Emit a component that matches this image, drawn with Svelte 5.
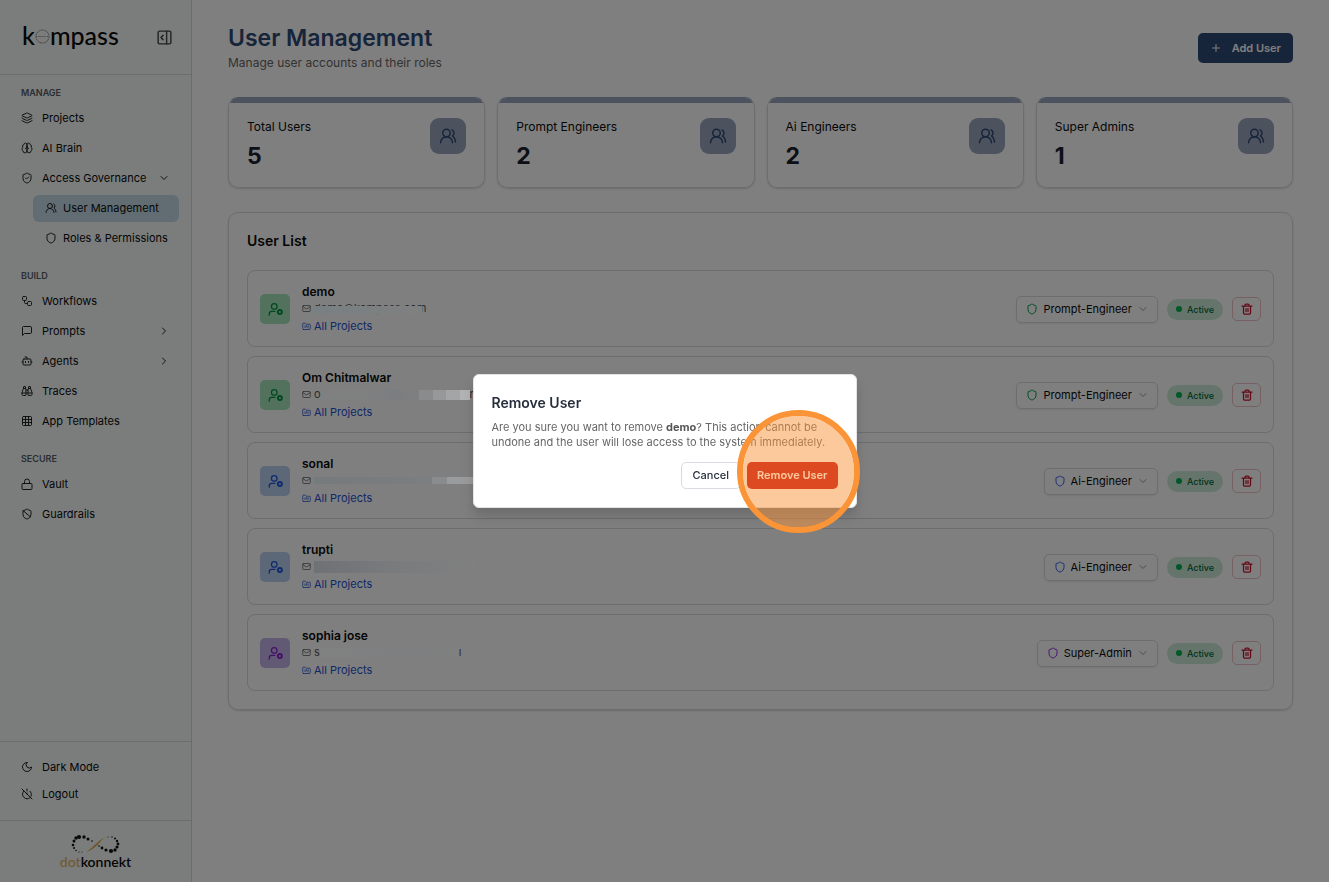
<script lang="ts">
  interface NavItem {
    label: string;
    icon: string;
    chevron?: string;
    sub?: boolean;
    active?: boolean;
  }

  interface User {
    name: string;
    emailStart: string;
    emailEnd: string;
    mask: string;
    role: string;
    tone: string;
  }

  const icons: Record<string, string> = {
    layers:
      '<path d="M12.8 2.2a2 2 0 0 0-1.7 0L2.6 6.1a1 1 0 0 0 0 1.8l8.6 3.9a2 2 0 0 0 1.6 0l8.6-3.9a1 1 0 0 0 0-1.8z"/><path d="M2 12a1 1 0 0 0 .6.9l8.6 3.9a2 2 0 0 0 1.6 0l8.6-3.9A1 1 0 0 0 22 12"/><path d="M2 17a1 1 0 0 0 .6.9l8.6 3.9a2 2 0 0 0 1.6 0l8.6-3.9A1 1 0 0 0 22 17"/>',
    brain:
      '<path d="M12 5a3 3 0 1 0-6 .1 4 4 0 0 0-2.5 5.8 4 4 0 0 0 .5 6.6A4 4 0 1 0 12 18z"/><path d="M12 5a3 3 0 1 1 6 .1 4 4 0 0 1 2.5 5.8 4 4 0 0 1-.5 6.6A4 4 0 1 1 12 18z"/><path d="M15 13a4.5 4.5 0 0 1-3-4 4.5 4.5 0 0 1-3 4"/>',
    shield:
      '<path d="M20 13c0 5-3.5 7.5-7.7 9a1 1 0 0 1-.6 0C7.5 20.5 4 18 4 13V6a1 1 0 0 1 1-1c2 0 4.5-1.2 6.2-2.7a1.2 1.2 0 0 1 1.5 0C14.5 3.8 17 5 19 5a1 1 0 0 1 1 1z"/>',
    shieldCheck:
      '<path d="M20 13c0 5-3.5 7.5-7.7 9a1 1 0 0 1-.6 0C7.5 20.5 4 18 4 13V6a1 1 0 0 1 1-1c2 0 4.5-1.2 6.2-2.7a1.2 1.2 0 0 1 1.5 0C14.5 3.8 17 5 19 5a1 1 0 0 1 1 1z"/><path d="m9 12 2 2 4-4"/>',
    shieldBan:
      '<path d="M20 13c0 5-3.5 7.5-7.7 9a1 1 0 0 1-.6 0C7.5 20.5 4 18 4 13V6a1 1 0 0 1 1-1c2 0 4.5-1.2 6.2-2.7a1.2 1.2 0 0 1 1.5 0C14.5 3.8 17 5 19 5a1 1 0 0 1 1 1z"/><path d="m4.2 5.2 14.4 12.5"/>',
    users:
      '<path d="M18 21a8 8 0 0 0-16 0"/><circle cx="10" cy="8" r="5"/><path d="M22 20c0-3.4-2-6.5-4-8a5 5 0 0 0-.5-8.3"/>',
    workflow:
      '<rect width="8" height="8" x="3" y="3" rx="2"/><path d="M7 11v4a2 2 0 0 0 2 2h4"/><rect width="8" height="8" x="13" y="13" rx="2"/>',
    message:
      '<path d="M21 15a2 2 0 0 1-2 2H7l-4 4V5a2 2 0 0 1 2-2h14a2 2 0 0 1 2 2z"/>',
    bot: '<path d="M12 8V4H8"/><rect width="16" height="12" x="4" y="8" rx="2"/><path d="M2 14h2M20 14h2M15 13v2M9 13v2"/>',
    binoculars:
      '<path d="M10 10h4M19 7V4a1 1 0 0 0-1-1h-2a1 1 0 0 0-1 1v3"/><path d="M20 21a2 2 0 0 0 2-2v-3.9c0-1.4-2-4.2-2-6.1a2 2 0 0 0-2-2h-2a2 2 0 0 0-2 2v11a1 1 0 0 0 1 1z"/><path d="M22 16H2"/><path d="M4 21a2 2 0 0 1-2-2v-3.9c0-1.4 2-4.2 2-6.1a2 2 0 0 1 2-2h2a2 2 0 0 1 2 2v11a1 1 0 0 1-1 1z"/><path d="M9 7V4a1 1 0 0 0-1-1H6a1 1 0 0 0-1 1v3"/>',
    grid: '<rect width="18" height="18" x="3" y="3" rx="2"/><path d="M3 9h18M3 15h18M9 3v18M15 3v18"/>',
    lock: '<rect width="20" height="12" x="2" y="11" rx="2"/><path d="M7 11V7a5 5 0 0 1 10 0v4"/>',
    moon: '<path d="M12 3a6 6 0 0 0 9 9 9 9 0 1 1-9-9z"/>',
    powerOff:
      '<path d="M18.4 6.6a9 9 0 0 1 1.9 9.8M12 2v4M2 2l20 20M12 12V10M5.6 6.4a9 9 0 0 0 12.6 12.8"/>',
    panel:
      '<rect width="18" height="18" x="3" y="3" rx="2"/><path d="M15 3v18M10 15l-3-3 3-3"/>',
    chevronDown: '<path d="m6 9 6 6 6-6"/>',
    chevronRight: '<path d="m9 18 6-6-6-6"/>',
    plus: '<path d="M5 12h14M12 5v14"/>',
    userCog:
      '<circle cx="10" cy="7" r="4.5"/><path d="M2 21v-2a4 4 0 0 1 4-4h5"/><circle cx="19" cy="16" r="3.2" stroke-width="3"/>',
    mail: '<rect width="20" height="16" x="2" y="4" rx="2"/><path d="m22 7-9 5.7a2 2 0 0 1-2 0L2 7"/>',
    folder:
      '<path d="M4 20h16a2 2 0 0 0 2-2V8a2 2 0 0 0-2-2h-8a2 2 0 0 1-1.7-.9l-.8-1.2A2 2 0 0 0 7.9 3H4a2 2 0 0 0-2 2v13a2 2 0 0 0 2 2z"/><path d="M8 10v5M12 10v3M16 10v6"/>',
    trash:
      '<path d="M2 6h20M19 6v14a2 2 0 0 1-2 2H7a2 2 0 0 1-2-2V6M8 6V4a2 2 0 0 1 2-2h4a2 2 0 0 1 2 2v2M10 11v6M14 11v6" stroke-width="2.5"/>',
  };

  const sections: { title: string; items: NavItem[] }[] = [
    {
      title: "MANAGE",
      items: [
        { label: "Projects", icon: "layers" },
        { label: "AI Brain", icon: "brain" },
        { label: "Access Governance", icon: "shieldCheck", chevron: "chevronDown" },
        { label: "User Management", icon: "users", sub: true, active: true },
        { label: "Roles & Permissions", icon: "shield", sub: true },
      ],
    },
    {
      title: "BUILD",
      items: [
        { label: "Workflows", icon: "workflow" },
        { label: "Prompts", icon: "message", chevron: "chevronRight" },
        { label: "Agents", icon: "bot", chevron: "chevronRight" },
        { label: "Traces", icon: "binoculars" },
        { label: "App Templates", icon: "grid" },
      ],
    },
    {
      title: "SECURE",
      items: [
        { label: "Vault", icon: "lock" },
        { label: "Guardrails", icon: "shieldBan" },
      ],
    },
  ];

  const stats = [
    { label: "Total Users", value: 5 },
    { label: "Prompt Engineers", value: 2 },
    { label: "Ai Engineers", value: 2 },
    { label: "Super Admins", value: 1 },
  ];

  const roles = ["Prompt-Engineer", "Ai-Engineer", "Super-Admin"];

  let users: User[] = $state([
    { name: "demo", emailStart: "demo@kompass.com", emailEnd: "", mask: "over", role: "Prompt-Engineer", tone: "green" },
    { name: "Om Chitmalwar", emailStart: "o", emailEnd: "n", mask: "steps", role: "Prompt-Engineer", tone: "green" },
    { name: "sonal", emailStart: "", emailEnd: "", mask: "thin", role: "Ai-Engineer", tone: "blue" },
    { name: "trupti", emailStart: "", emailEnd: "", mask: "dark", role: "Ai-Engineer", tone: "blue" },
    { name: "sophia jose", emailStart: "s", emailEnd: "ı", mask: "faint", role: "Super-Admin", tone: "purple" },
  ]);

  // x, y, radius of the dots along the infinity loop
  const dots = [
    [3, 7, 1.5], [5, 4, 1.7], [8, 3, 2.1], [13, 3, 1.7], [17, 5, 1.5], [21, 7, 0.8],
    [2, 11, 1.3], [3, 14, 1], [5, 16.5, 0.8], [8, 18, 0.6], [11, 18, 0.5],
    [28, 12, 0.8], [31, 14, 1.4], [35, 16, 1.6], [40, 17, 2.1], [44, 16, 1.7], [46, 13, 1.6],
    [47, 10, 1.4], [46, 7, 1.2], [44, 4.5, 1], [41, 3, 0.7], [37, 3, 0.5],
  ];
</script>

{#snippet icon(name: string, size = 12)}
  <svg
    class="icon"
    width={size}
    height={size}
    viewBox="0 0 24 24"
    fill="none"
    stroke="currentColor"
    stroke-width="2"
    stroke-linecap="round"
    stroke-linejoin="round"
    aria-hidden="true"
  >
    {@html icons[name]}
  </svg>
{/snippet}

<div class="app">
  <aside class="sidebar">
    <div class="brand">
      <div class="wordmark">
        <span>k</span>
        <svg width="15" height="15" viewBox="0 0 15 15" fill="none" stroke="#888" aria-hidden="true">
          <circle cx="7.5" cy="7.5" r="6.5" stroke-dasharray="2 0.6" />
          <path d="M1 7.5h2M12 7.5h2M3.5 7.5h8" stroke-dasharray="1.2 0.8" />
        </svg>
        <span>mpass</span>
      </div>
      <button class="plain" aria-label="Collapse sidebar">{@render icon("panel", 17)}</button>
    </div>

    <nav>
      {#each sections as section}
        <section>
          <h3>{section.title}</h3>
          {#each section.items as item}
            <a href="#top" class="nav-item" class:sub={item.sub} class:active={item.active}>
              {@render icon(item.icon)}
              <span class="nav-label">{item.label}</span>
              {#if item.chevron}
                {@render icon(item.chevron)}
              {/if}
            </a>
          {/each}
        </section>
      {/each}
    </nav>

    <div class="sidebar-actions">
      <button class="nav-item">{@render icon("moon")}<span>Dark Mode</span></button>
      <button class="nav-item">{@render icon("powerOff")}<span>Logout</span></button>
    </div>

    <div class="vendor">
      <svg width="50" height="21" viewBox="0 0 50 21" aria-hidden="true">
        {#each dots as [x, y, r]}
          <circle cx={x} cy={y} {r} fill="#111" />
        {/each}
        <path d="M15 18C21 15 25 8 34 3 29 7 25 15 15 18z" fill="#e0a84a" />
      </svg>
      <p><span>dot</span>konnekt</p>
    </div>
  </aside>

  <main>
    <header>
      <div>
        <h1>User Management</h1>
        <p>Manage user accounts and their roles</p>
      </div>
      <button class="add">{@render icon("plus")}Add User</button>
    </header>

    <div class="stats">
      {#each stats as stat}
        <div class="stat">
          <div class="stat-body">
            <div>
              <p class="stat-label">{stat.label}</p>
              <p class="stat-value">{stat.value}</p>
            </div>
            <div class="stat-icon">{@render icon("users", 18)}</div>
          </div>
        </div>
      {/each}
    </div>

    <section class="list">
      <h2>User List</h2>
      <ul>
        {#each users as user}
          <li class={user.tone}>
            <div class="avatar">{@render icon("userCog", 15)}</div>
            <div class="info">
              <p class="name">{user.name}</p>
              <p class="email">
                {@render icon("mail", 9)}
                <span class="address">
                  <span>{user.emailStart}</span>
                  <span class="mask {user.mask}"></span>
                  <span>{user.emailEnd}</span>
                </span>
              </p>
              <a class="projects" href="#projects">{@render icon("folder", 9)}All Projects</a>
            </div>
            <div class="controls">
              <label class="role">
                {@render icon("shield")}
                <select bind:value={user.role} aria-label="Role of {user.name}">
                  {#each roles as role}
                    <option>{role}</option>
                  {/each}
                </select>
                {@render icon("chevronDown", 12)}
              </label>
              <span class="status">Active</span>
              <button class="delete" aria-label="Remove {user.name}">{@render icon("trash")}</button>
            </div>
          </li>
        {/each}
      </ul>
    </section>
  </main>
</div>

<div class="backdrop"></div>

<div class="modal-layer">
  <div class="modal" role="dialog" aria-modal="true" aria-labelledby="modal-title">
    <h2 id="modal-title">Remove User</h2>
    <p>
      Are you sure you want to remove <strong>demo</strong>? This action cannot be undone and the
      user will lose access to the system immediately.
    </p>
    <div class="modal-actions">
      <button class="cancel">Cancel</button>
      <button class="confirm">Remove User</button>
      <span class="click-ring"></span>
    </div>
  </div>
</div>

<style>
  :global(body) {
    margin: 0;
    background: #fff;
  }

  .app,
  .modal-layer {
    font-family: Inter, "Liberation Sans", sans-serif;
    font-size: 11px;
    color: #0a0a0a;
  }

  .app {
    display: flex;
    min-height: 100vh;
  }

  h1,
  h2,
  h3,
  p,
  ul {
    margin: 0;
    padding: 0;
  }

  button,
  select {
    font: inherit;
    color: inherit;
    border: 0;
    padding: 0;
    background: none;
    cursor: pointer;
  }

  .icon {
    flex: none;
    display: block;
  }

  .sidebar {
    box-sizing: border-box;
    width: 192px;
    flex: none;
    display: flex;
    flex-direction: column;
    background: #f6faf9;
    border-right: 1px solid #d4d8da;
  }

  .brand {
    box-sizing: border-box;
    height: 75px;
    display: flex;
    align-items: center;
    justify-content: space-between;
    padding: 0 18px 0 22px;
    border-bottom: 1px solid #d4d8da;
  }

  .wordmark {
    display: flex;
    align-items: center;
    padding-bottom: 4px;
    font-family: Lato, sans-serif;
    font-size: 25px;
    line-height: 30px;
    font-weight: 500;
  }

  .wordmark svg {
    margin-top: 3px;
  }

  .plain {
    color: #444;
  }

  nav {
    flex: 1;
    padding: 11px 12px;
  }

  nav section + section {
    margin-top: 17px;
  }

  h3 {
    padding: 0 9px;
    margin-bottom: 6px;
    font-size: 9px;
    line-height: 13px;
    font-weight: 600;
    color: #555d66;
  }

  .nav-item {
    box-sizing: border-box;
    width: 100%;
    height: 27px;
    display: flex;
    align-items: center;
    gap: 9px;
    padding: 0 9px 1px;
    border-radius: 6px;
    color: #0a0a0a;
    line-height: 14px;
    text-decoration: none;
  }

  .nav-item .icon {
    color: #222;
  }

  nav .nav-item + .nav-item {
    margin-top: 3px;
  }

  .nav-label {
    flex: 1;
    white-space: nowrap;
  }

  .sub {
    width: auto;
    margin-left: 21px;
    padding: 0 12px 1px;
    gap: 6px;
  }

  .active {
    background: #c2dbe6;
  }

  .sidebar-actions {
    padding: 12px;
    border-top: 1px solid #d4d8da;
  }

  .vendor {
    box-sizing: border-box;
    height: 62px;
    display: flex;
    flex-direction: column;
    align-items: center;
    padding-top: 13px;
    border-top: 1px solid #d4d8da;
    font-family: Lato, sans-serif;
    font-size: 14px;
    line-height: 14px;
    font-weight: 600;
  }

  .vendor span {
    color: #e2b566;
  }

  main {
    flex: 1;
    min-width: 0;
    padding: 23px 36px;
  }

  header {
    display: flex;
    align-items: center;
    justify-content: space-between;
    margin-bottom: 24px;
  }

  h1 {
    font-size: 23px;
    line-height: 30px;
    font-weight: 600;
    color: #2e4a75;
  }

  header p {
    font-size: 12px;
    line-height: 20px;
    color: #666;
  }

  .add {
    display: flex;
    align-items: center;
    gap: 10px;
    height: 30px;
    padding: 0 12px;
    border-radius: 5px;
    background: #2e4a75;
    color: #fff;
    font-weight: 600;
  }

  .stats {
    display: grid;
    grid-template-columns: repeat(4, 1fr);
    gap: 12px;
    margin-bottom: 24px;
  }

  .stat,
  .list {
    border: 1px solid #d8dadd;
    border-radius: 10px;
    box-shadow: 0 1px 2px rgba(0, 0, 0, 0.15);
  }

  .stat {
    overflow: hidden;
    border-top-color: #9aa5be;
  }

  .stat::before {
    content: "";
    display: block;
    height: 5px;
    background: #9aa5be;
  }

  .stat-body {
    display: flex;
    justify-content: space-between;
    align-items: flex-start;
    padding: 15px 18px 17px;
  }

  .stat-label {
    font-size: 12px;
    line-height: 18px;
    margin-bottom: 6px;
  }

  .stat-value {
    font-size: 23px;
    line-height: 28px;
    font-weight: 700;
    color: #1a202c;
  }

  .stat-icon {
    width: 36px;
    height: 36px;
    display: grid;
    place-items: center;
    border-radius: 9px;
    background: #9aa5be;
    color: #2e4a75;
  }

  .list {
    padding: 18px;
  }

  .list h2 {
    font-size: 14px;
    line-height: 20px;
    font-weight: 600;
    margin-bottom: 19px;
  }

  ul {
    display: flex;
    flex-direction: column;
    gap: 9px;
    list-style: none;
  }

  li {
    display: flex;
    align-items: center;
    gap: 12px;
    padding: 12px 12px 11px;
    border: 1px solid #d8dadd;
    border-radius: 8px;
  }

  .avatar {
    width: 30px;
    height: 30px;
    display: grid;
    place-items: center;
    border-radius: 5px;
  }

  .green .avatar {
    background: #a4e4ba;
    color: #00933f;
  }

  .blue .avatar {
    background: #b8cfee;
    color: #1f55dd;
  }

  .purple .avatar {
    background: #c4b4ea;
    color: #8a1fd0;
  }

  .info {
    flex: 1;
    min-width: 0;
    line-height: 17px;
  }

  .name {
    font-size: 12px;
    font-weight: 600;
  }

  .email,
  .projects {
    display: flex;
    align-items: center;
    gap: 3px;
  }

  .email {
    height: 17px;
    color: #55595f;
  }

  .address {
    position: relative;
    display: flex;
    align-items: center;
  }

  .projects {
    width: fit-content;
    margin-top: 1px;
    color: #1d4fd0;
    text-decoration: none;
  }

  /* redaction bars stay above the page backdrop */
  .mask {
    position: relative;
    z-index: 11;
    height: 10px;
  }

  .over {
    position: absolute;
    left: 0;
    right: 4px;
    top: 6px;
    height: 8px;
    background: linear-gradient(90deg, #788083, #808080);
  }

  .steps {
    width: 149px;
    background: linear-gradient(
      90deg,
      #7f8080 0 30%,
      #7b7e80 50%,
      #7e7f80 66%,
      #8a8b8c 66% 75%,
      #979899 75% 84%,
      #a4a5a6 84% 93%,
      #b1b3b4 93%
    );
  }

  .thin {
    width: 160px;
    height: 7px;
    background: linear-gradient(90deg, #757a7d, #7c7e80 74%, #8a8b8c 74% 83%, #999b9c 83%);
  }

  .dark {
    width: 163px;
    height: 12px;
    background: linear-gradient(90deg, #6f7275, #797b7d 50%, #808080);
  }

  .faint {
    width: 139px;
    background: linear-gradient(90deg, #808282, #7e7f80 70%, #808080);
  }

  .controls {
    display: flex;
    align-items: center;
    gap: 9px;
  }

  .role {
    box-sizing: border-box;
    height: 27px;
    display: flex;
    align-items: center;
    gap: 5px;
    padding: 0 8px 0 9px;
    border: 1px solid #d8dadd;
    border-radius: 5px;
    box-shadow: 0 1px 2px rgba(0, 0, 0, 0.08);
  }

  .role select {
    appearance: none;
    field-sizing: content;
  }

  .role .icon:last-child {
    color: #999;
  }

  .green .role .icon:first-child {
    color: #00a045;
  }

  .blue .role .icon:first-child {
    color: #2f5ff0;
  }

  .purple .role .icon:first-child {
    color: #9326e8;
  }

  .status {
    display: flex;
    align-items: center;
    gap: 5px;
    height: 21px;
    padding: 0 9px;
    border-radius: 11px;
    background: #cdead8;
    color: #016630;
    font-size: 9px;
    font-weight: 500;
  }

  .status::before {
    content: "";
    width: 6px;
    height: 6px;
    border-radius: 50%;
    background: #00b050;
  }

  .delete {
    box-sizing: border-box;
    width: 29px;
    height: 24px;
    display: grid;
    place-items: center;
    border: 1px solid #ecc0c3;
    border-radius: 5px;
    color: #c8102a;
  }

  .backdrop {
    position: fixed;
    inset: 0;
    z-index: 10;
    background: rgba(0, 0, 0, 0.5);
  }

  .modal-layer {
    position: fixed;
    inset: 0;
    z-index: 12;
    display: grid;
    place-items: center;
  }

  .modal {
    box-sizing: border-box;
    width: 384px;
    padding: 18px;
    border: 1px solid #e2e4e8;
    border-radius: 6px;
    background: #fff;
    box-shadow: 0 8px 12px rgba(0, 0, 0, 0.15);
  }

  .modal h2 {
    font-size: 14px;
    line-height: 20px;
    font-weight: 600;
    color: #262f3d;
    margin-bottom: 7px;
  }

  .modal p {
    line-height: 15px;
    color: #666;
    margin-bottom: 12px;
  }

  .modal strong {
    font-weight: 700;
    color: #555;
  }

  .modal-actions {
    position: relative;
    display: flex;
    justify-content: flex-end;
    gap: 6px;
  }

  .modal-actions button {
    box-sizing: border-box;
    height: 27px;
    padding: 0 10px 1px;
    border-radius: 5px;
    font-weight: 500;
  }

  .modal-actions .cancel {
    padding: 0 11px 1px;
    border: 1px solid #d8dce0;
    color: #262f3d;
  }

  .modal-actions .confirm {
    background: #c10007;
    color: #fff;
    font-weight: 600;
  }

  /* click highlight around the confirm button */
  .click-ring {
    position: absolute;
    right: -22px;
    top: -52px;
    box-sizing: border-box;
    width: 123px;
    height: 123px;
    border: 6px solid #fa9437;
    border-radius: 50%;
    background: rgba(250, 147, 60, 0.5);
    background-clip: padding-box;
    pointer-events: none;
  }
</style>
